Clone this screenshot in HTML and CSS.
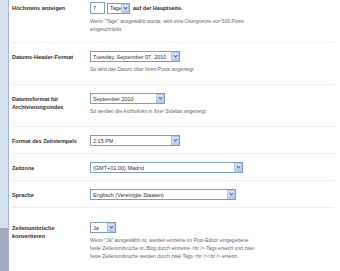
FILE: index.html
```html
<!DOCTYPE html>
<html lang="de">
<head>
  <meta charset="UTF-8">
  <title>Formatierung</title>
  <link rel="stylesheet" href="styles.css">
</head>
<body>
  <div class="page">
    <div class="sidebar"></div>

    <div class="settings">

      <div class="row row-first">
        <div class="label">Höchstens anzeigen</div>
        <div class="field">
          <div class="inline">
            <div class="textbox">7</div>
            <div class="select w-tage"><span>Tage</span><i class="arrow"></i></div>
            <b class="suffix">auf der Hauptseite.</b>
          </div>
          <p class="help">Wenn "Tage" ausgewählt wurde, wird eine Obergrenze von 500 Posts<br>eingeschränkt.</p>
        </div>
      </div>

      <div class="row">
        <div class="label">Datums-Header-Format</div>
        <div class="field">
          <div class="select w-date"><span>Tuesday, September 07, 2010</span><i class="arrow"></i></div>
          <p class="help">So wird das Datum über Ihren Posts angezeigt.</p>
        </div>
      </div>

      <div class="row">
        <div class="label">Datumsformat für<br>Archivierungsindex</div>
        <div class="field">
          <div class="select w-archive"><span>September 2010</span><i class="arrow"></i></div>
          <p class="help">So werden die Archivlinks in Ihrer Sidebar angezeigt.</p>
        </div>
      </div>

      <div class="row">
        <div class="label">Format des Zeitstempels</div>
        <div class="field">
          <div class="select w-date"><span>2:15 PM</span><i class="arrow"></i></div>
        </div>
      </div>

      <div class="row">
        <div class="label">Zeitzone</div>
        <div class="field">
          <div class="select w-zone"><span>(GMT+01:00) Madrid</span><i class="arrow"></i></div>
        </div>
      </div>

      <div class="row">
        <div class="label">Sprache</div>
        <div class="field">
          <div class="select w-lang"><span>Englisch (Vereinigte Staaten)</span><i class="arrow"></i></div>
        </div>
      </div>

      <div class="row row-last">
        <div class="label">Zeilenumbrüche<br>konvertieren</div>
        <div class="field">
          <div class="select w-yes"><span>Ja</span><i class="arrow"></i></div>
          <p class="help">Wenn "Ja" ausgewählt ist, werden einzelne im Post-Editor eingegebene<br>feste Zeilenumbrüche im Blog durch einzelne &lt;br /&gt;-Tags ersetzt und zwei<br>feste Zeilenumbrüche werden durch zwei Tags &lt;br /&gt;&lt;br /&gt; ersetzt.</p>
        </div>
      </div>

    </div>
  </div>
</body>
</html>
```

FILE: styles.css
```css
body {
  margin: 0;
  background-color: #fff;
  font-family: "Liberation Sans", Arial, sans-serif;
  color: #333;
}

.page {
  display: flex;
  min-height: 271px;
}

/* blue strip of the left navigation */
.sidebar {
  width: 8px;
  flex-shrink: 0;
  border-right: 1px solid #a7b6cf;
  background: linear-gradient(#d6e1f0 0, #d6e1f0 84%, #a3aac4 84%, #a3aac4 100%);
}

.settings {
  flex: 1;
  padding-left: 3px;
  padding-right: 6px;
}

.row {
  display: grid;
  grid-template-columns: 78px 1fr;
  padding: 8px 0 7px;
  border-bottom: 1px solid #efefef;
}
.row-first {
  padding-top: 2px;
}
.row-first .help {
  margin-bottom: 2px;
}
.row-last {
  padding-top: 14px;
  border-bottom: none;
}

.label {
  font-size: 5.5px;
  font-weight: bold;
  line-height: 8px;
  padding-top: 2px;
  color: #2b2b2b;
}

.field {
  font-size: 5.5px;
}

.inline {
  display: flex;
  align-items: center;
  gap: 2px;
}

.textbox {
  width: 11px;
  height: 10px;
  line-height: 10px;
  padding-left: 2px;
  border: 1px solid #7f9db9;
  color: #333;
}

.select {
  display: flex;
  align-items: center;
  justify-content: space-between;
  height: 11px;
  box-sizing: border-box;
  border: 1px solid #7f9db9;
  padding-left: 2px;
  color: #333;
  background-color: #fff;
}
.select span {
  white-space: nowrap;
  overflow: hidden;
}

.arrow {
  position: relative;
  width: 8px;
  height: 9px;
  flex-shrink: 0;
  box-sizing: border-box;
  border: 1px solid #b5c8f0;
  background: linear-gradient(#dfe8fd, #b6cbf5);
}
.arrow::after {
  content: "";
  position: absolute;
  left: 2px;
  top: 1px;
  width: 2px;
  height: 2px;
  border-right: 1px solid #4d6185;
  border-bottom: 1px solid #4d6185;
  transform: rotate(45deg);
}

.w-tage { width: 23px; }
.w-date { width: 90px; }
.w-archive { width: 75px; }
.w-zone { width: 153px; }
.w-lang { width: 146px; }
.w-yes { width: 26px; }

.suffix {
  font-size: 5.5px;
  color: #2b2b2b;
  margin-left: 1px;
}

.help {
  margin: 3px 0 4px;
  font-size: 5px;
  line-height: 8px;
  color: #666;
}
```
